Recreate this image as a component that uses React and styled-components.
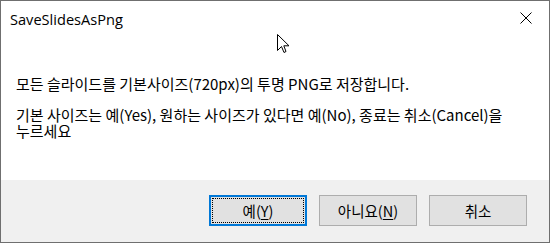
import React from "react";
import styled, { createGlobalStyle } from "styled-components";

const Global = createGlobalStyle`
  html, body { margin: 0; padding: 0; background: #ffffff; }
  body { font-family: "Open Sans", "Noto Sans CJK KR", sans-serif; }
`;

const Window = styled.div`
  position: relative;
  box-sizing: border-box;
  width: 550px;
  height: 243px;
  border: 1px solid #6f6f6f;
  background: #ffffff;
  display: flex;
  flex-direction: column;
  overflow: hidden;
`;

const TitleBar = styled.div`
  height: 40px;
  display: flex;
  align-items: flex-start;
  justify-content: space-between;
  padding: 9px 0 0 9px;
  box-sizing: border-box;
`;

const Title = styled.div`
  font-family: "Open Sans", "Noto Sans CJK KR", sans-serif;
  font-size: 14.6px;
  color: #000;
  line-height: 18px;
`;

const CloseBtn = styled.div`
  width: 46px;
  height: 30px;
  margin-top: -9px;
  display: flex;
  align-items: center;
  justify-content: center;
  padding-top: 4px;
  box-sizing: border-box;
`;

const Body = styled.div`
  flex: 1;
  width: 500px;
  padding: 35px 0 0 15px;
  font-family: "Noto Sans CJK KR", sans-serif;
  font-size: 15px;
  color: #000;
`;

const Para = styled.p`
  margin: 0 0 ${(p) => p.$gap || 0}px 0;
  line-height: 16px;
`;

const Footer = styled.div`
  height: 62px;
  background: #f0f0f0;
  display: flex;
  justify-content: flex-end;
  align-items: flex-start;
  gap: 12px;
  padding: 15px 22px 0 0;
  box-sizing: border-box;
`;

const Button = styled.div`
  position: relative;
  box-sizing: border-box;
  width: 98px;
  height: 31px;
  background: #e1e1e1;
  border: ${(p) => (p.$default ? "2px solid #0078d7" : "1px solid #adadad")};
  display: flex;
  align-items: center;
  justify-content: center;
  font-family: "Noto Sans CJK KR", sans-serif;
  font-size: 14.5px;
  color: #000;
`;

const Focus = styled.span`
  position: absolute;
  inset: 1px;
  border: 1px dotted #000;
`;

const U = styled.span`
  text-decoration: underline;
  text-underline-offset: 2px;
`;

const Cursor = styled.svg`
  position: absolute;
  left: 276px;
  top: 33px;
`;

export default function App() {
  return (
    <>
      <Global />
      <Window>
        <TitleBar>
          <Title>SaveSlidesAsPng</Title>
          <CloseBtn>
            <svg width="12" height="12" viewBox="0 0 12 12">
              <path d="M0.5 0.5 L11.5 11.5 M11.5 0.5 L0.5 11.5" stroke="#000" strokeWidth="1" fill="none" />
            </svg>
          </CloseBtn>
        </TitleBar>
        <Body>
          <Para $gap={15}>모든 슬라이드를 기본사이즈(720px)의 투명 PNG로 저장합니다.</Para>
          <Para>기본 사이즈는 예(Yes), 원하는 사이즈가 있다면 예(No), 종료는 취소(Cancel)을 누르세요</Para>
        </Body>
        <Footer>
          <Button $default>
            <Focus />
            예(<U>Y</U>)
          </Button>
          <Button>
            아니요(<U>N</U>)
          </Button>
          <Button>취소</Button>
        </Footer>
        <Cursor width="13" height="21" viewBox="0 0 13 21">
          <path
            d="M0.5 0.5 L0.5 16.5 L4.5 12.5 L7 18.5 L9 17.5 L6.8 11.8 L12 11.8 Z"
            fill="#fff"
            stroke="#000"
            strokeWidth="1"
            strokeLinejoin="miter"
          />
        </Cursor>
      </Window>
    </>
  );
}
